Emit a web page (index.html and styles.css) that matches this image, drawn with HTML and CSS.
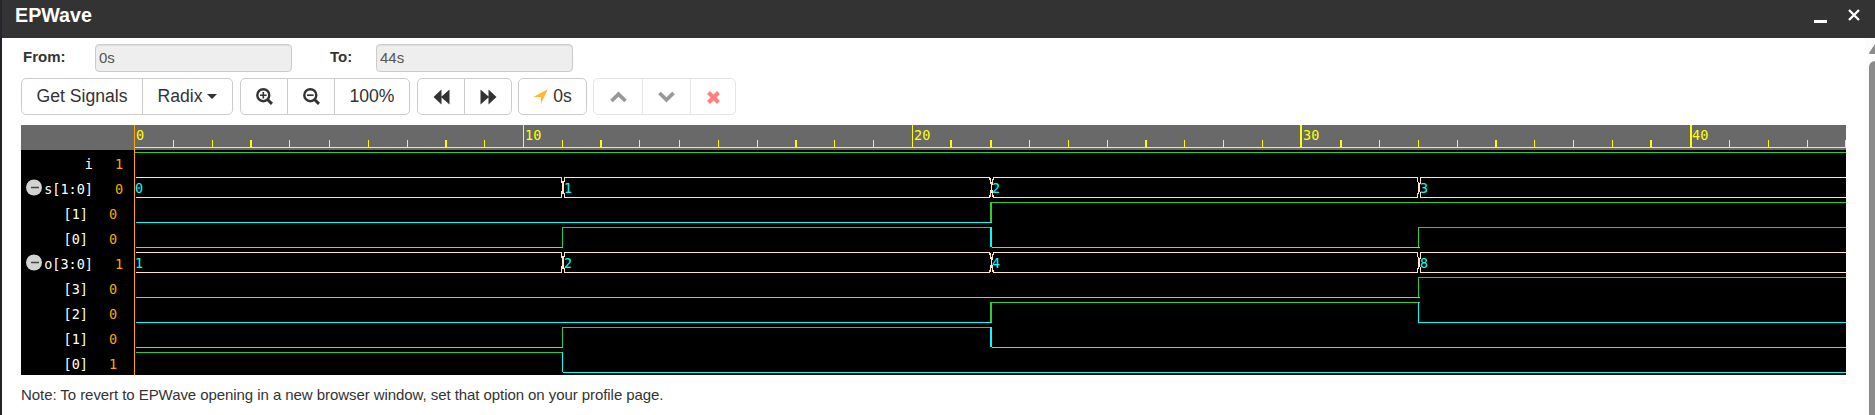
FILE: index.html
```
<!DOCTYPE html>
<html lang="en">
<head>
<meta charset="utf-8">
<title>EPWave</title>
<link rel="stylesheet" href="styles.css">
</head>
<body>
<div class="window">
  <header class="titlebar">
    <h1 class="title">EPWave</h1>
    <div class="controls">
      <svg width="13" height="3" viewBox="0 0 13 3"><path d="M0 0h13v3H0z" fill="#fff"/></svg>
      <svg width="12" height="12" viewBox="0 0 12 12"><path d="M1 1L11 11M11 1L1 11" stroke="#fff" stroke-width="2.300"/></svg>
    </div>
  </header>
  <div class="body">
    <main class="content">
      <div class="range">
        <label class="label" for="from">From:</label>
        <input class="field" id="from" value="0s" disabled>
        <label class="label label-to" for="to">To:</label>
        <input class="field" id="to" value="44s" disabled>
      </div>
      <div class="toolbar">
        <div class="group">
          <button class="btn signals">Get Signals</button>
          <button class="btn radix">Radix<span class="caret"></span></button>
        </div>
        <div class="group g-zoom">
          <button class="btn w47"><svg width="17" height="17" viewBox="0 0 17 17" fill="none" stroke="#333"><circle cx="7.300" cy="7.200" r="6" stroke-width="2.400"/><path d="M11.500 11.500L16 15.800" stroke-width="3"/><path d="M4 7.200h6.600M7.300 4v6.500" stroke-width="1.600"/></svg></button>
          <button class="btn w47"><svg width="17" height="17" viewBox="0 0 17 17" fill="none" stroke="#333"><circle cx="7.300" cy="7.200" r="6" stroke-width="2.400"/><path d="M11.500 11.500L16 15.800" stroke-width="3"/><path d="M4 7.200h6.600" stroke-width="1.700"/></svg></button>
          <button class="btn percent">100%</button>
        </div>
        <div class="group g-seek">
          <button class="btn w47"><svg width="17" height="16" viewBox="0 0 17 16"><path d="M8.500 .5V15.500L.5 8zM16.500 .5V15.500L8 8z" fill="#333"/></svg></button>
          <button class="btn w46"><svg width="17" height="16" viewBox="0 0 17 16"><path d="M.5 .5V15.500L9 8zM8.500 .5V15.500L16.500 8z" fill="#333"/></svg></button>
        </div>
        <div class="group g-cursor">
          <button class="btn cursor"><svg width="15" height="15" viewBox="0 0 15 15"><path d="M14.800 .2L8 14.800V8H.2z" fill="#ffb733"/></svg>0s</button>
        </div>
        <div class="group g-move">
          <button class="btn off first"><svg width="17" height="12" viewBox="0 0 17 12"><path d="M1.500 10L8.500 3.200L15.500 10" fill="none" stroke="#333" stroke-width="3.700"/></svg></button>
          <button class="btn off"><svg width="17" height="12" viewBox="0 0 17 12"><path d="M1.500 2L8.500 8.800L15.500 2" fill="none" stroke="#333" stroke-width="3.700"/></svg></button>
          <button class="btn off last"><svg width="13" height="13" viewBox="0 0 13 13"><path d="M1.500 1.500L11.500 11.500M11.500 1.500L1.500 11.500" stroke="red" stroke-width="4"/></svg></button>
        </div>
      </div>
      <svg class="wave" width="1825" height="250" viewBox="21 125 1825 250" shape-rendering="crispEdges">
        <path fill="#000" d="M21 125h1825v250H21z"/>
        <path fill="#696969" d="M21 125h1825v25H21z"/>
        <g id="ticks" fill="#ff0"><path d="M135 147h1711v1H135z"/></g>
        <g class="scale">
          <text x="136" y="140">0</text><text x="525" y="140">10</text><text x="914" y="140">20</text><text x="1303" y="140">30</text><text x="1692" y="140">40</text>
        </g>
        <g class="name">
          <text x="93" y="169">i</text><text x="93" y="194">s[1:0]</text><text x="88" y="219">[1]</text><text x="88" y="244">[0]</text><text x="93" y="269">o[3:0]</text><text x="88" y="294">[3]</text><text x="88" y="319">[2]</text><text x="88" y="344">[1]</text><text x="88" y="369">[0]</text>
        </g>
        <g class="value">
          <text x="115" y="169">1</text><text x="115" y="194">0</text><text x="109" y="219">0</text><text x="109" y="244">0</text><text x="115" y="269">1</text><text x="109" y="294">0</text><text x="109" y="319">0</text><text x="109" y="344">0</text><text x="109" y="369">1</text>
        </g>
        <g shape-rendering="auto"><circle cx="34" cy="187.500" r="8" fill="#d3d3d3"/><circle cx="34" cy="262.500" r="8" fill="#d3d3d3"/><path d="M31 187.500h8M31 262.500h8" stroke="#444" stroke-width="1.300"/></g>
        <g class="high">
          <path d="M135 152.500H1846"/>
          <path d="M991 202.500H1846"/>
          <path d="M562.500 247V227.500H990M1418.500 247V227.500H1846"/>
          <path d="M1418.500 297V277.500H1846"/>
          <path d="M991 302.500H1420"/>
          <path d="M562.500 347V327.500H991"/>
          <path d="M136 352.500H562"/>
          <path d="M991 202V222M991 302V322" stroke-width="2"/>
        </g>
        <g class="low">
          <path d="M136 222.500H992"/>
          <path d="M136 247.500H563M992 247.500H1420"/>
          <path d="M136 297.500H1420"/>
          <path d="M136 322.500H992M1418.500 302V322.500H1846"/>
          <path d="M136 347.500H563M992 347.500H1846"/>
          <path d="M562.500 352V372M563 372.500H1846"/>
          <path d="M991 227V247M991 327V347" stroke-width="2"/>
        </g>
        <g class="bus">
          <path id="bus" d="M136 177.500H561.500V183M136 197.500H561.500V191M562.500 181V194M563.500 181V194M990 177.500H564.500V182M990 197.500H564.500V193M989.500 177V180M990.500 178V184M991.500 182V193M990.500 190V197M989.500 195V198M1417.500 177.500H993.500V180M1417.500 197.500H993.500V195M992.500 179V185M992.500 190V197M1417.500 177V182M1417.500 193V198M1418.500 182V194M1419.500 183V192M1846 177.500H1420.500V184M1846 197.500H1420.500V192"/>
          <use href="#bus" y="75"/>
        </g>
        <g class="data">
          <text x="135" y="193">0</text><text x="564" y="193">1</text><text x="992" y="193">2</text><text x="1420" y="193">3</text>
          <text x="135" y="268">1</text><text x="564" y="268">2</text><text x="992" y="268">4</text><text x="1420" y="268">8</text>
        </g>
        <path d="M134 125h1v250h-1z" fill="orange"/>
      </svg>
      <p class="note">Note: To revert to EPWave opening in a new browser window, set that option on your profile page.</p>
    </main>
    <div class="scrollbar">
      <svg width="10" height="10" viewBox="0 0 10 10"><path d="M0 9L6 0H10V10H1Q0 10 0 9z" fill="#8b8b8b"/></svg>
      <div class="thumb"></div>
    </div>
  </div>
</div>
<script src="ticks.js"></script>
</body>
</html>
```
FILE: styles.css
```
* { box-sizing: border-box; }
body { margin: 0; width: 1875px; height: 415px; overflow: hidden; background: #23252b; font-family: "Liberation Sans", Arial, sans-serif; color: #333; }
.window { margin-left: 2px; height: 415px; background: #fff; display: flex; flex-direction: column; }
.titlebar { height: 38px; background: #333; display: flex; justify-content: space-between; padding: 0 15px 0 13px; flex: none; }
.title { margin: 4px 0 0; font-size: 19.7px; line-height: 22px; font-weight: bold; color: #fff; }
.controls { display: flex; gap: 21px; padding-top: 9px; }
.controls svg:first-child { margin-top: 11px; }
.body { flex: 1; display: flex; justify-content: space-between; }
.content { padding: 6px 0 0 19px; }
.range { display: flex; align-items: flex-start; }
.label { width: 74px; padding-left: 2px; font-size: 15px; line-height: 26px; font-weight: bold; }
.label-to { width: 48px; margin-left: 36px; }
.field { width: 197px; height: 28px; border: 1px solid #ccc; border-radius: 4px; background: #eee; box-shadow: inset 0 1px 1px rgba(0,0,0,.075); color: #555; padding: 0 3px 1px; font: 15px "Liberation Sans", Arial, sans-serif; }
.toolbar { display: flex; margin-top: 6px; }
.group { display: flex; height: 37px; border: 1px solid #ccc; border-radius: 5px; }
.g-zoom, .g-seek { margin-left: 7px; }
.g-cursor, .g-move { margin-left: 6px; }
.g-move { opacity: .5; }
.btn { display: flex; align-items: center; justify-content: center; border: 0; border-right: 1px solid #ccc; background: none; padding: 0; color: #333; font: 17.6px "Liberation Sans", Arial, sans-serif; white-space: nowrap; }
.btn:last-child { border-right: 0; }
.signals { width: 121px; }
.radix { width: 89px; gap: 5px; }
.caret { border: 5.5px solid transparent; border-top-color: #333; border-bottom: 0; }
.w47 { width: 47px; }
.w46 { width: 46px; }
.percent { width: 74px; }
.cursor { width: 67px; gap: 5px; }
.off { width: 48px; padding-top: 1px; }
.first { width: 49px; }
.last { width: 44px; }
.wave { display: block; margin-top: 10px; font: 13.5px "DejaVu Sans Mono", monospace; }
.scale { fill: #ff0; }
.name { fill: #fff; text-anchor: end; }
.value { fill: orange; }
.data { fill: #0ff; }
.high { stroke: #32cd32; fill: none; }
.low { stroke: #0ff; fill: none; }
.bus { stroke: bisque; fill: none; }
.note { margin: 11px 0 0; font-size: 15px; line-height: 18px; letter-spacing: -.065px; }
.scrollbar { width: 10px; padding: 6px 0 0 4px; background: #fcfcfc; overflow: hidden; }
.scrollbar svg { display: block; }
.thumb { width: 6px; height: 354px; margin-top: 7px; background: #8b8b8b; border-top-left-radius: 6px; }
```
FILE: ticks.js
```
const ticks = document.getElementById('ticks');
// Marks that cover two pixel columns, with their left column.
const wide = { 3: 250, 8: 445, 12: 600, 17: 795, 21: 950, 22: 990, 26: 1145, 30: 1300, 31: 1340, 35: 1495, 39: 1650, 40: 1690, 44: 1845 };
const snapped = { 4: 289, 6: 368, 7: 407, 13: 639, 15: 718, 16: 757, 25: 1107 };
for (let n = 1; n <= 44; n++) {
  const mark = document.createElementNS('http://www.w3.org/2000/svg', 'rect');
  const major = n % 10 === 0;
  mark.setAttribute('x', wide[n] || snapped[n] || Math.round(134 + n * 38.9));
  mark.setAttribute('y', major ? 125 : 140);
  mark.setAttribute('width', wide[n] ? 2 : 1);
  mark.setAttribute('height', major ? 22 : 7);
  ticks.appendChild(mark);
}
```
